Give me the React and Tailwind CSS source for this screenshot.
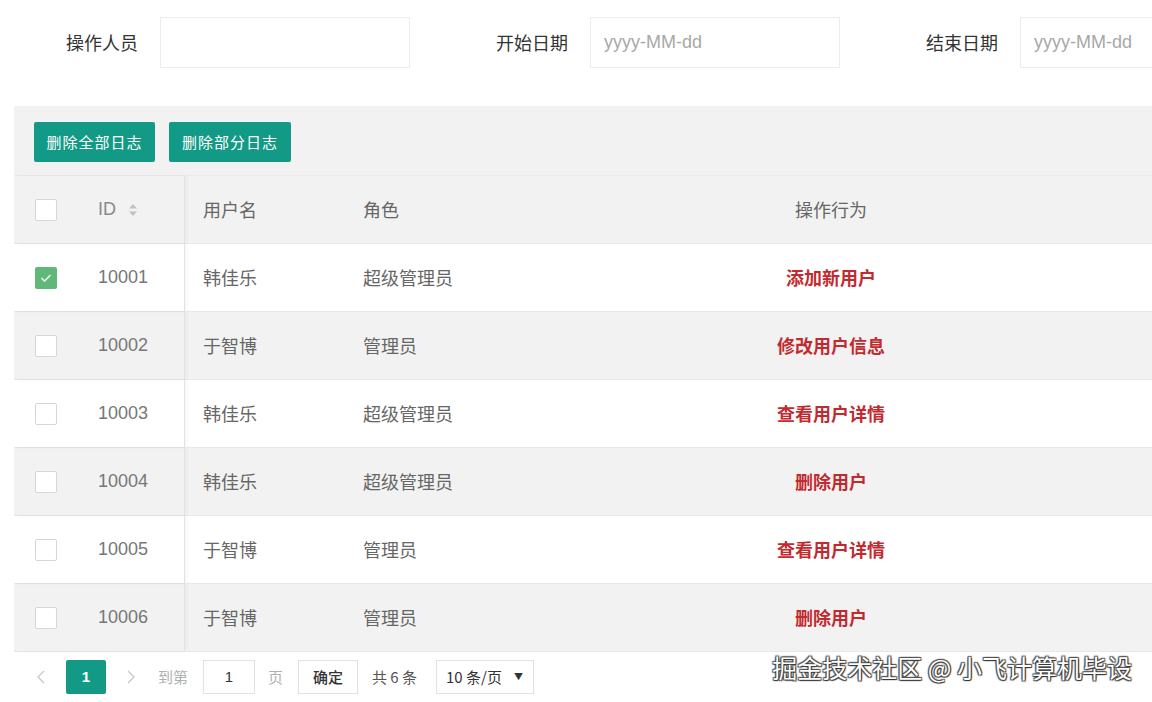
import React from "react";

const rows = [
  { id: "10001", name: "韩佳乐", role: "超级管理员", act: "添加新用户", checked: true },
  { id: "10002", name: "于智博", role: "管理员", act: "修改用户信息" },
  { id: "10003", name: "韩佳乐", role: "超级管理员", act: "查看用户详情" },
  { id: "10004", name: "韩佳乐", role: "超级管理员", act: "删除用户" },
  { id: "10005", name: "于智博", role: "管理员", act: "查看用户详情" },
  { id: "10006", name: "于智博", role: "管理员", act: "删除用户" },
];

function Checkbox({ checked }) {
  if (checked) {
    return (
      <div className="w-[22px] h-[22px] rounded-[2px] bg-[#5fb878] flex items-center justify-center">
        <svg width="12" height="10" viewBox="0 0 12 10">
          <path d="M1.5 5 L4.5 8 L10.5 2" stroke="#e8f6ec" strokeWidth="1.6" fill="none" />
        </svg>
      </div>
    );
  }
  return <div className="w-[22px] h-[22px] rounded-[2px] bg-white border border-[#d6d6d6]" />;
}

function Row({ bg, children }) {
  return <div className={`flex h-[68px] border-b border-[#e8e8e8] ${bg}`}>{children}</div>;
}

export default function App() {
  const font = { fontFamily: '"Noto Sans CJK SC", "Liberation Sans", sans-serif' };
  const latin = { fontFamily: '"Liberation Sans", sans-serif' };
  return (
    <div className="w-[1152px] h-[702px] bg-white overflow-hidden relative" style={font}>
      {/* filter bar */}
      <div className="flex h-[106px] pt-[17px] items-start whitespace-nowrap">
        <div className="w-[160px] shrink-0 h-[51px] flex items-center justify-end pr-[22px] text-[18px] text-[#333]">操作人员</div>
        <div className="w-[250px] h-[51px] shrink-0 border border-[#ececec] bg-white" />
        <div className="w-[180px] shrink-0 h-[51px] flex items-center justify-end pr-[22px] text-[18px] text-[#333]">开始日期</div>
        <div className="w-[250px] h-[51px] shrink-0 border border-[#ececec] bg-white flex items-center pl-[13px] text-[18px] text-[#a8a8a8]" style={latin}>yyyy-MM-dd</div>
        <div className="w-[180px] shrink-0 h-[51px] flex items-center justify-end pr-[22px] text-[18px] text-[#333]">结束日期</div>
        <div className="w-[250px] h-[51px] shrink-0 border border-[#ececec] bg-white flex items-center pl-[13px] text-[18px] text-[#a8a8a8]" style={latin}>yyyy-MM-dd</div>
      </div>

      {/* table panel */}
      <div className="ml-[14px] bg-[#f2f2f2]">
        <div className="h-[70px] flex items-start pt-[16px] pl-[20px] gap-[14px] border-b border-[#ebebeb]">
          <button className="h-[40px] w-[121px] bg-[#139a87] rounded-[2px] text-white text-[15px] tracking-[1px]">删除全部日志</button>
          <button className="h-[40px] w-[122px] bg-[#139a87] rounded-[2px] text-white text-[15px] tracking-[1px]">删除部分日志</button>
        </div>

        <div className="text-[18px] text-[#666]">
          <Row bg="bg-[#f2f2f2]">
            <div className="w-[171px] flex items-center border-r border-[#e2e2e2] shadow-[2px_0_4px_rgba(0,0,0,0.04)]">
              <div className="w-[61px] pl-[21px]"><Checkbox /></div>
              <div className="pl-[23px] flex items-center gap-[12px]" style={latin}>
                <span className="text-[#888]">ID</span>
                <svg width="10" height="14" viewBox="0 0 10 14"><path d="M5 1 L9 5.5 H1 Z M5 13 L9 8.5 H1 Z" fill="#c2c2c2" /></svg>
              </div>
            </div>
            <div className="w-[160px] pl-[18px] flex items-center">用户名</div>
            <div className="w-[165px] pl-[18px] flex items-center">角色</div>
            <div className="flex-1 flex items-center justify-center">操作行为</div>
          </Row>
          {rows.map((r, i) => (
            <Row key={r.id} bg={i % 2 === 0 ? "bg-white" : "bg-[#f2f2f2]"}>
              <div className="w-[171px] flex items-center border-r border-[#e2e2e2] shadow-[2px_0_4px_rgba(0,0,0,0.04)]">
                <div className="w-[61px] pl-[21px]"><Checkbox checked={r.checked} /></div>
                <div className="pl-[23px] text-[#777]" style={latin}>{r.id}</div>
              </div>
              <div className="w-[160px] pl-[18px] flex items-center">{r.name}</div>
              <div className="w-[165px] pl-[18px] flex items-center">{r.role}</div>
              <div className="flex-1 flex items-center justify-center font-bold text-[#c22a30]">{r.act}</div>
            </Row>
          ))}
        </div>
      </div>

      {/* pagination */}
      <div className="ml-[14px] h-[50px] bg-white flex items-center text-[15px] whitespace-nowrap">
        <svg className="ml-[22px]" width="10" height="16" viewBox="0 0 10 16"><path d="M8 2 L2 8 L8 14" stroke="#c8c8c8" strokeWidth="1.3" fill="none" /></svg>
        <div className="ml-[20px] w-[40px] h-[34px] bg-[#139a87] rounded-[2px] text-white flex items-center justify-center font-bold" style={latin}>1</div>
        <svg className="ml-[20px]" width="10" height="16" viewBox="0 0 10 16"><path d="M2 2 L8 8 L2 14" stroke="#c8c8c8" strokeWidth="1.3" fill="none" /></svg>
        <span className="ml-[22px] w-[32px] text-[#b0b0b0]">到第</span>
        <div className="ml-[13px] w-[52px] h-[34px] border border-[#e2e2e2] flex items-center justify-center text-[#333]" style={latin}>1</div>
        <span className="ml-[13px] w-[16px] text-[#b0b0b0]">页</span>
        <div className="ml-[14px] w-[60px] h-[34px] border border-[#e2e2e2] flex items-center justify-center text-[#333] font-medium">确定</div>
        <span className="ml-[14px] w-[50px] text-[#555]">共 6 条</span>
        <div className="ml-[14px] w-[98px] h-[34px] border border-[#e2e2e2] flex items-center pl-[9px] text-[#333]">
          <span>10 条/页</span>
          <span className="ml-[12px] text-[9px]">▼</span>
        </div>
      </div>

      {/* watermark */}
      <div
        className="absolute right-[20px] top-[649px] text-[25px] text-white whitespace-nowrap"
        style={{ textShadow: "0 0 1px #333, 1px 1px 1px #333, -1px -1px 1px #555, 1px -1px 1px #555, -1px 1px 1px #555" }}
      >
        掘金技术社区 @ 小飞计算机毕设
      </div>
    </div>
  );
}
